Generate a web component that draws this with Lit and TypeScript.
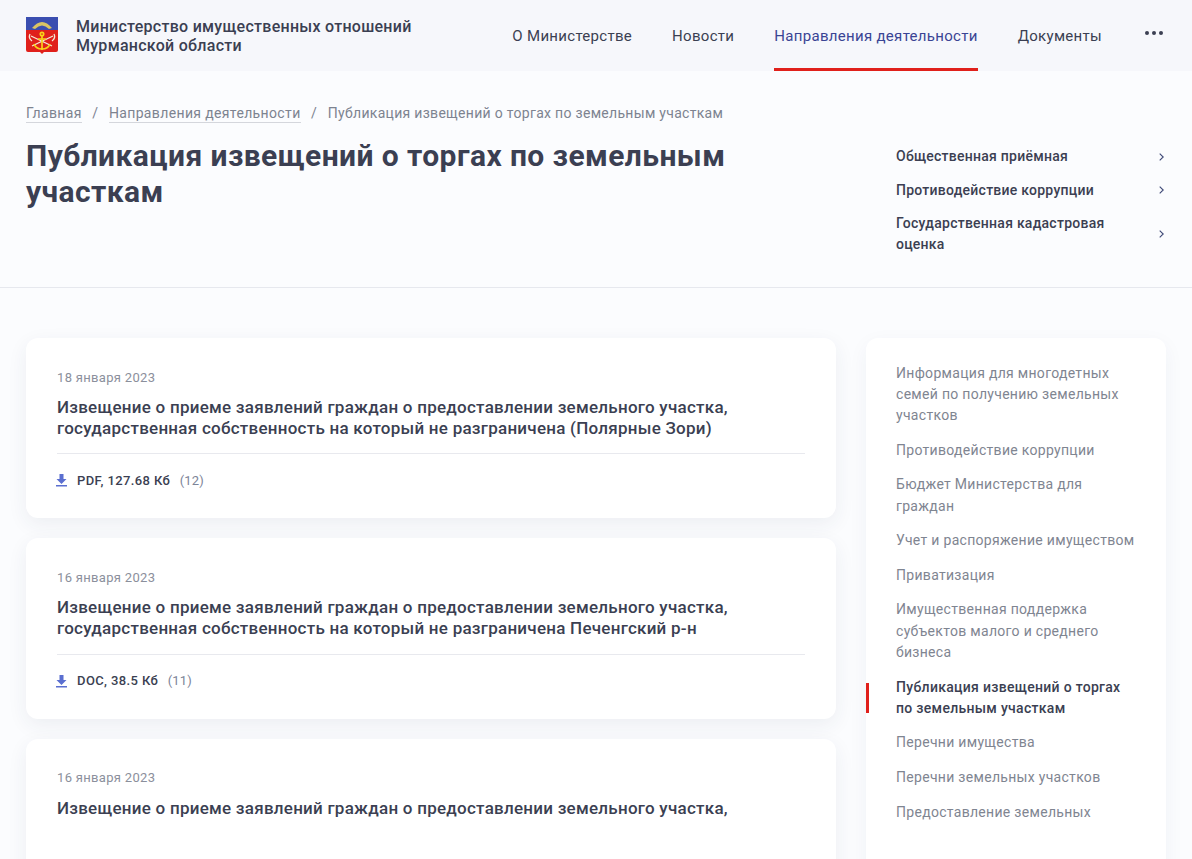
import { LitElement, html, css } from "lit";
import { customElement } from "lit/decorators.js";

const cards = [
  { date: "18 января 2023", title: "Извещение о приеме заявлений граждан о предоставлении земельного участка, государственная собственность на который не разграничена (Полярные Зори)", file: "PDF, 127.68 Кб", n: "(12)" },
  { date: "16 января 2023", title: "Извещение о приеме заявлений граждан о предоставлении земельного участка, государственная собственность на который не разграничена Печенгский р-н", file: "DOC, 38.5 Кб", n: "(11)" },
  { date: "16 января 2023", title: "Извещение о приеме заявлений граждан о предоставлении земельного участка,", file: "", n: "" },
];
const side = [
  "Информация для многодетных семей по получению земельных участков",
  "Противодействие коррупции",
  "Бюджет Министерства для граждан",
  "Учет и распоряжение имуществом",
  "Приватизация",
  "Имущественная поддержка субъектов малого и среднего бизнеса",
  "Публикация извещений о торгах по земельным участкам",
  "Перечни имущества",
  "Перечни земельных участков",
  "Предоставление земельных",
];

@customElement("app-root")
export class AppRoot extends LitElement {
  static styles = css`
    :host { display: block; height: 859px; overflow: hidden; background: #fbfcfe; font-family: Roboto, "Noto Sans", sans-serif; color: #3b3f52; }
    a { color: inherit; text-decoration: none; }
    .header { height: 71px; background: #f6f7fb; display: flex; justify-content: space-between; padding: 0 29px 0 26px; }
    .brand { display: flex; align-items: center; gap: 18px; font-size: 16px; font-weight: 500; line-height: 19px; letter-spacing: .27px; }
    .brand svg { display: block; }
    .nav { display: flex; gap: 40px; align-items: stretch; font-size: 15px; letter-spacing: .3px; }
    .nav a { display: flex; align-items: center; height: 71px; box-sizing: border-box; border-bottom: 3px solid transparent; padding-top: 3px; }
    .nav a.on { color: #3a4494; border-bottom-color: #e0201b; }
    .dots { display: flex; gap: 3px; align-self: flex-start; margin: 31px 0 0 3px; }
    .dots i { width: 4px; height: 4px; border-radius: 50%; background: #3b3f52; }
    .top { height: 216px; border-bottom: 1px solid #e6e8ee; padding: 0 26px; display: flex; justify-content: space-between; }
    .crumbs { display: flex; align-items: baseline; font-size: 14px; letter-spacing: .36px; color: #7d8390; padding-top: 33px; line-height: 18px; }
    .crumbs a { border-bottom: 1px solid #d4d6dc; }
    .crumbs span.sep { margin: 0 10.5px; }
    .crumbs span.last { letter-spacing: .3px; }
    h1 { margin: 15px 0 0; font-size: 30px; line-height: 36px; font-weight: 700; letter-spacing: .42px; width: 760px; color: #3b3f52; }
    .quick { width: 270px; padding-top: 75.2px; display: flex; flex-direction: column; gap: 12.6px; font-size: 14px; font-weight: 500; line-height: 21px; letter-spacing: .25px; }
    .quick a { display: flex; justify-content: space-between; align-items: center; }
    .quick a span { max-width: 230px; }
    .quick svg { flex: none; margin-right: 2px; }
    .main { display: flex; justify-content: space-between; padding: 50px 26px 0; }
    .list { width: 810px; display: flex; flex-direction: column; gap: 20px; }
    .card { background: #fff; border-radius: 12px; box-shadow: 0 6px 20px rgba(40, 50, 90, .07); padding: 31.7px 31px 29.4px; }
    .card.cut { height: 200px; box-sizing: border-box; }
    .date { font-size: 13px; line-height: 16px; color: #8b8f9c; letter-spacing: .32px; }
    .title { font-size: 17px; line-height: 21px; font-weight: 500; margin-top: 11.3px; letter-spacing: .25px; padding-bottom: 14.3px; border-bottom: 1px solid #e8e9ee; }
    .cut .title { border-bottom: 0; }
    .file { display: flex; align-items: center; margin-top: 18.7px; font-size: 13px; font-weight: 500; line-height: 16px; letter-spacing: .39px; }
    .file svg { margin-right: 10px; margin-left: -1px; }
    .file em { font-style: normal; font-weight: 400; color: #7d8498; margin-left: 9.5px; letter-spacing: .2px; }
    .menu { width: 300px; height: 640px; background: #fff; border-radius: 12px; box-shadow: 0 6px 20px rgba(40, 50, 90, .05); padding: 24.5px 30px 0; box-sizing: border-box; display: flex; flex-direction: column; gap: 13.31px; font-size: 14px; line-height: 21.3px; letter-spacing: .3px; color: #7f8591; }
    .menu a { position: relative; display: block; }
    .menu a.on { color: #3b3f52; font-weight: 500; letter-spacing: .3px; }
    .menu a.on::before { content: ""; position: absolute; left: -30px; top: 50%; margin-top: -15px; height: 30px; width: 3px; background: #e0201b; }
  `;

  render() {
    const chev = html`<svg width="5" height="8" viewBox="0 0 5 8" fill="none" stroke="#3f4a78" stroke-width="1.15"><path d="M.7.6L4.2 4 .7 7.4"/></svg>`;
    return html`
      <div class="header">
        <a class="brand" href="#">
          <svg width="32" height="37" viewBox="0 0 32 37">
            <path d="M0 0h32v33q0 2-2 2H18l-2 2-2-2H2q-2 0-2-2z" fill="#e0201b"/>
            <path d="M0 0h32v13H0z" fill="#3a4eb0"/>
            <path d="M6 11Q16-1 26 11l-3 1q-7-7-14 0z" fill="#d9c464"/>
            <g fill="none" stroke="#f3e9d8" stroke-width="1.3"><path d="M5 19l21 10M27 19L6 29"/><path d="M4 17q-2 4 2 7M28 17q2 4-2 7"/></g>
            <g fill="none" stroke="#f7d21a" stroke-width="1.7"><circle cx="16" cy="17" r="1.7"/><path d="M16 19v14M12 22h8M8 27q2 5 8 5t8-5"/></g>
          </svg>
          <span>Министерство имущественных отношений<br>Мурманской области</span>
        </a>
        <nav class="nav">
          <a href="#">О Министерстве</a>
          <a href="#">Новости</a>
          <a href="#" class="on">Направления деятельности</a>
          <a href="#">Документы</a>
          <div class="dots"><i></i><i></i><i></i></div>
        </nav>
      </div>
      <section class="top">
        <div>
          <div class="crumbs"><a href="#">Главная</a><span class="sep">/</span><a href="#">Направления деятельности</a><span class="sep">/</span><span class="last">Публикация извещений о торгах по земельным участкам</span></div>
          <h1>Публикация извещений о торгах по земельным участкам</h1>
        </div>
        <div class="quick">
          <a href="#"><span>Общественная приёмная</span>${chev}</a>
          <a href="#"><span>Противодействие коррупции</span>${chev}</a>
          <a href="#"><span>Государственная кадастровая оценка</span>${chev}</a>
        </div>
      </section>
      <div class="main">
        <div class="list">
          ${cards.map((c) => html`
            <article class="card ${c.file ? "" : "cut"}">
              <div class="date">${c.date}</div>
              <div class="title">${c.title}</div>
              ${c.file ? html`<div class="file">
                <svg width="11" height="13" viewBox="0 0 11 13" fill="#5b6fd0"><path d="M3.5 0h4v5h3l-5 5-5-5h3zM0 11h11v1.5H0z"/></svg>
                <span>${c.file}</span><em>${c.n}</em>
              </div>` : ""}
            </article>`)}
        </div>
        <aside class="menu">
          ${side.map((s, i) => html`<a href="#" class=${i === 6 ? "on" : ""}>${s}</a>`)}
        </aside>
      </div>
    `;
  }
}
